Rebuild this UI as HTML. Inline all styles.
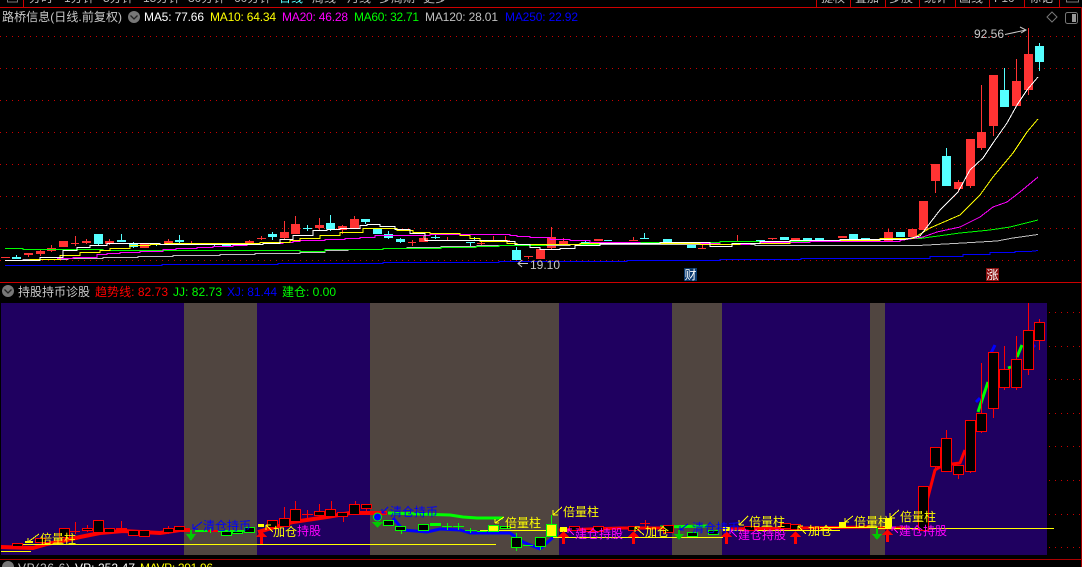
<!DOCTYPE html>
<html lang="zh"><head><meta charset="utf-8"><title>路桥信息</title>
<style>
html,body{margin:0;padding:0;background:#000;width:1082px;height:567px;overflow:hidden}
svg{display:block}
text{font-family:"Liberation Sans","WenQuanYi Zen Hei","Noto Sans CJK SC",sans-serif;font-size:12px}
.c{shape-rendering:crispEdges}
</style></head><body>
<svg width="1082" height="567" viewBox="0 0 1082 567" xmlns="http://www.w3.org/2000/svg">
<rect width="1082" height="567" fill="#000"/>
<!-- header -->
<g fill="#bbb">
<text x="29" y="2">分时</text><text x="64" y="2">1分钟</text><text x="103" y="2">5分钟</text><text x="143" y="2">15分钟</text><text x="188" y="2">30分钟</text><text x="234" y="2">60分钟</text>
<text x="279" y="2" fill="#5ff">日线</text><text x="312" y="2">周线</text><text x="347" y="2">月线</text><text x="379" y="2">多周期</text><text x="423" y="2">更多</text>
<text x="821" y="2">提权</text><text x="855" y="2">叠加</text><text x="889" y="2">多股</text><text x="924" y="2">统计</text><text x="959" y="2">画线</text><text x="994" y="2">F10</text><text x="1029" y="2">标记</text>
</g>
<g class="c" fill="none">
<path stroke="#777" d="M7.500 -1v3h10v-3M1066.500 -1v3h12v-3"/>
<path stroke="#c00" d="M0 7.500H1082M23.500 0V7M816.500 0V7M850.500 0V7M885.500 0V7M919.500 0V7M955.500 0V7M989.500 0V7M1024.500 0V7M1059.500 0V7"/>
<path stroke="#a00" d="M1081.500 7V567"/>
<path stroke="#c00" d="M0 282.500H1082"/>
<path stroke="#a00" d="M0 559.500H1082"/>
</g>
<!-- title row -->
<text x="2" y="21" fill="#c8c8c8" textLength="120" lengthAdjust="spacing">路桥信息(日线.前复权)</text>
<circle cx="134" cy="17" r="6" fill="#777"/><path d="M130.500 15.500l3.500 3.500 3.500-3.500" fill="none" stroke="#222" stroke-width="1.300"/>
<text x="144" y="21" fill="#fff" textLength="60" lengthAdjust="spacing">MA5: 77.66</text>
<text x="210" y="21" fill="#ff0" textLength="66" lengthAdjust="spacing">MA10: 64.34</text>
<text x="282" y="21" fill="#f0f" textLength="66" lengthAdjust="spacing">MA20: 46.28</text>
<text x="354" y="21" fill="#0f0" textLength="65" lengthAdjust="spacing">MA60: 32.71</text>
<text x="425" y="21" fill="#c0c0c0" textLength="73" lengthAdjust="spacing">MA120: 28.01</text>
<text x="505" y="21" fill="#00f" textLength="73" lengthAdjust="spacing">MA250: 22.92</text>
<path d="M1052 12l5 5-5 5-5-5z" fill="none" stroke="#777"/>
<rect x="1065.500" y="12.500" width="12" height="11" rx="2" fill="none" stroke="#777"/><rect x="1072" y="14" width="4" height="8" fill="#999"/>
<!-- upper grid -->
<path fill="none" stroke="#c00" stroke-dasharray="1 5" class="c" d="M0 36.500H1080M0 68.500H1080M0 100.500H1080M0 132.500H1080M0 164.500H1080M0 196.500H1080M0 228.500H1080M0 260.500H1080"/>
<!-- upper candles -->
<g class="c">
<path fill="none" stroke="#f33" d="M28.500 253V257M40.500 249V256M51.500 245V252M75.500 236V246M86.500 239V244M109.500 239V245M168.500 239V245M191.500 241V245M249.500 240V244M261.500 236V240M284.500 221V240M295.500 216V224M319.500 218V231M342.500 225V234M354.500 216V228M412.500 240V246M423.500 235V238M447.500 237V240M481.500 241V245M493.500 236V240M505.500 236V240M528.500 256V259M551.500 227V250M563.500 238V244M633.500 237V241M702.500 244V249M737.500 235V242M772.500 238V240M888.500 229V232M935.500 181V193M958.500 180V192M970.500 186V188M981.500 85V150M993.500 126V136M1016.500 59V81M1028.500 28V95"/>
<path fill="#f33" d="M1 257h9v1h-9zM24 253h9v2h-9zM36 251h9v3h-9zM47 248h9v3h-9zM59 241h9v6h-9zM71 243h8v1h-8zM82 241h9v2h-9zM105 241h9v3h-9zM140 244h9v4h-9zM164 241h9v3h-9zM187 243h9v2h-9zM198 244h8v1h-8zM232 244h10v1h-10zM245 241h9v3h-9zM257 238h9v1h-9zM280 232h9v6h-9zM291 224h9v10h-9zM315 225h9v3h-9zM338 226h9v4h-9zM350 219h9v9h-9zM408 242h8v1h-8zM419 238h9v4h-9zM477 243h8v1h-8zM489 240h9v2h-9zM501 240h9v1h-9zM524 256h9v1h-9zM536 249h9v10h-9zM547 237h9v11h-9zM559 241h9v3h-9zM594 239h9v2h-9zM629 240h9v1h-9zM698 248h8v1h-8zM768 238h9v1h-9zM791 238h9v2h-9zM838 236h9v2h-9zM884 232h9v9h-9zM908 229h9v8h-9zM919 201h9v29h-9zM931 164h9v17h-9zM954 182h9v7h-9zM966 139h9v47h-9zM977 132h9v16h-9zM989 75h9v51h-9zM1012 81h9v25h-9zM1024 54h9v36h-9z"/>
<path fill="none" stroke="#5ff" d="M16.500 255V257M98.500 244V245M121.500 234V240M133.500 242V248M156.500 244V246M179.500 235V244M214.500 245V246M226.500 243V247M272.500 232V240M307.500 225V231M330.500 215V231M365.500 222V224M388.500 231V239M400.500 238V243M435.500 235V239M474.500 237V240M470.500 243V246M516.500 247V250M585.500 240V242M644.500 233V239M946.500 148V156M1004.500 68V90M1039.500 43V71"/>
<path fill="#5ff" d="M12 257h9v2h-9zM94 234h9v10h-9zM117 240h9v2h-9zM129 244h9v3h-9zM152 244h8v1h-8zM175 240h9v2h-9zM210 243h8v2h-8zM222 245h9v1h-9zM268 234h9v3h-9zM326 223h9v6h-9zM303 228h9v1h-9zM361 219h9v3h-9zM373 229h9v5h-9zM384 234h9v4h-9zM396 239h9v3h-9zM431 237h9v1h-9zM466 242h9v1h-9zM512 250h9v10h-9zM581 242h10v2h-10zM604 240h8v1h-8zM640 238h9v1h-9zM663 239h9v4h-9zM687 245h9v3h-9zM756 240h9v1h-9zM780 237h9v3h-9zM803 238h9v2h-9zM815 238h9v2h-9zM849 234h9v5h-9zM861 238h9v2h-9zM896 232h9v5h-9zM942 156h9v30h-9zM1000 90h9v17h-9zM1035 46h9v16h-9z"/>
</g>
<!-- MA lines -->
<g fill="none" class="c">
<path stroke="#00f" d="M5 265.500H162V264.500H278V263.500H383V262.500H499V261.500H627V260.500H720V259.500H801V258.500H930V256.500H963V254.500H990V252.500H1015V251.500H1030L1038 250.500"/>
<path stroke="#c0c0c0" d="M5 260.500H23V259.500H68V258.500H103V257.500H138V256.500H173V255.500H220V254.500H255V253.500H300V252.500H325V250.500H348V249.500H383V248.500H407V247.500H441V246.500H477V245.500H570V244.500H755V245.500H918L963 243L997 241L1013 238L1038 234.500"/>
<path stroke="#0f0" d="M5 248.500H23V249.500H103V250.500H300V251.500H325V249.500H383V248.500H441V247.500H476V246.500H499V245.500H546V244.500H600V242.500H720V241.500H820V240.500H880V238.500H920L960 233L990 230L1010 227L1038 220"/>
<path stroke="#f0f" d="M57 258.500H73V257.500H97V254.500H107V253.500H120V252.500H140V251.500H163V249.500H176V248.500H197V247.500H213V246.500H233V245.500H247V244.500H263V243.500H283V242.500H293V241.500H300V240.500H325V239.500H345V238.500H360V237.500H375V235.500H430V234.500H510V235.500H517V236.500H530V237.500H550V239.500H570V240.500H590V242.500H640V243.500H720V244.500H750V243.500H760V242.500H810V241.500H900V240.500L923 237L937 232L960 227L980 217L993 207L1007 202L1020 192L1038 177"/>
<path stroke="#ff0" d="M5 260.500H30V259.500H60V255.500H80V252.500H100V250.500H110V248.500H130V245.500H150V244.500H165V243.500H260V242.500H290V240.500H300V238.500H320V235.500H340V232.500H363V228.500H397V230.500H413V232.500H430V233.500H460V235.500H470V238.500H480V241.500H507V243.500H517V244.500H580V243.500H700V244.500H740V243.500H790V240.500H880V238.500H913L930 228L960 215L980 195L993 177L1013 153L1027 132L1038 119"/>
<path stroke="#fff" d="M5 260.500H40V257.500H63V250.500H77V247.500H90V245.500H107V243.500H160V244.500H263V243.500H280V239.500H293V235.500H313V230.500H327V229.500H340V228.500H360V225.500H367V224.500H380V226.500H395V229.500H410V233.500H425V240.500H507V241.500H515V244.500H530V247.500H540V249.500H560V248.500H575V245.500H600V243.500H660V242.500H710V246.500H732V243.500H760V241.500H790V240.500H840V239.500H905L920 236L940 210L958 192L970 170L983 158L993 143L1007 123L1017 105L1027 90L1038 77"/>
</g>
<!-- labels upper -->
<text x="974" y="38" fill="#c8c8c8" textLength="30" lengthAdjust="spacing">92.56</text>
<path d="M1005 34.500L1026 30M1020 27l6 3-5 3" fill="none" stroke="#c8c8c8"/>
<path d="M528 263.500H518M522 260l-4 3.500 4 3.500" fill="none" stroke="#c8c8c8"/>
<text x="530" y="269" fill="#c8c8c8" textLength="30" lengthAdjust="spacing">19.10</text>
<rect x="684" y="268" width="13" height="13" fill="#0a3a70"/><text x="684.500" y="279" fill="#fff">财</text>
<rect x="986" y="268" width="13" height="13" fill="#8a0f0f"/><text x="986.500" y="279" fill="#fff">涨</text>
<!-- subpanel title -->
<circle cx="8" cy="291" r="6" fill="#777"/><path d="M4.500 289.500l3.500 3.500 3.500-3.500" fill="none" stroke="#222" stroke-width="1.300"/>
<text x="18" y="296" fill="#c8c8c8" textLength="72" lengthAdjust="spacing">持股持币诊股</text>
<text x="95" y="296" fill="#f00" textLength="73" lengthAdjust="spacing">趋势线: 82.73</text>
<text x="173" y="296" fill="#0f0" textLength="49" lengthAdjust="spacing">JJ: 82.73</text>
<text x="227" y="296" fill="#00f" textLength="50" lengthAdjust="spacing">XJ: 81.44</text>
<text x="282" y="296" fill="#0f0" textLength="54" lengthAdjust="spacing">建仓: 0.00</text>
<!-- lower grid -->
<path fill="none" stroke="#c00" stroke-dasharray="1 5" class="c" d="M1049 312.500H1080M1049 346.500H1080M1049 379.500H1080M1049 413.500H1080M1049 446.500H1080M1049 480.500H1080M1049 514.500H1080M1049 547.500H1080"/>
<!-- lower panel -->
<g class="c">
<rect x="1" y="303" width="1046" height="252" fill="#1f0060"/>
<path fill="#504540" d="M184 303h73v252h-73zM370 303h189v252h-189zM672 303h50v252h-50zM870 303h15v252h-15z"/>
</g>
<!-- trend bands -->
<g fill="none" stroke-linejoin="bevel">
<path stroke="#00f" stroke-width="3" d="M393 518L403 530L427 532L440 529L460 530L470 533L510 533L523 542L540 549L550 540L557 534"/>
<path stroke="#00f" stroke-width="3" d="M976 402L980 398M995 345L990 355M1035 345L1030 350"/>
<path stroke="#0f0" stroke-width="3" d="M388 513L450 515L463 517L477 518L503 518M660 527L708 526"/>
<path stroke="#0f0" stroke-width="2" d="M195 531H208M218 531H245"/>
<path stroke="#0f0" stroke-width="3" d="M978 412L988 382M1008 368L1011 367M1017 357L1022 345"/>
<path stroke="#f00" stroke-width="2" d="M208 531H218"/>
<path stroke="#f00" stroke-width="4" d="M1 547L33 548L47 544L67 540L80 537L100 533L123 531L160 533L180 530L190 530M258 532L293 522L327 517L350 513L387 513"/>
<path stroke="#f00" stroke-width="3" d="M559 530L620 528L670 528M722 529L870 527M878 528L905 528M920 528L928 497L935 470L940 467L952 464L960 463L965 450"/>
</g>
<!-- lower yellow lines -->
<path class="c" fill="none" stroke="#ff0" d="M1 551.500H31M13 544.500H496M480 530.500H547M553 537.500H723M723 530.500H840M820 527.500H877M877 528.500H1054"/>
<!-- lower candles -->
<g class="c">
<path fill="none" stroke="#f00" d="M70 531.500H80M302 514.500H313M640 523.500H650M75.500 522V534M87.500 525V532M121.500 521V532M168.500 526V534M284.500 507V518M295.500 501V509M307.500 510V518M319.500 504V516M331.500 501V518M343.500 512V522M355.500 501V504M366.500 508V513M645.500 520V527M946.500 430V438M958.500 474V479M970.500 471V473M981.500 363V413M981.500 431V433M993.500 408V418M1004.500 346V369M1004.500 387V390M1016.500 336V359M1016.500 387V390M1028.500 303V330M1028.500 369V375M1039.500 319V322M1039.500 340V350M935.500 466V470"/>
<path fill="#000" stroke="#f00" d="M12.500 543.500h10v3h-10zM35.500 538.500h10v4h-10zM59.500 528.500h10v9h-10zM82.500 528.500h10v2h-10zM93.500 520.500h10v12h-10zM104.500 528.500h10v4h-10zM116.500 528.500h10v1h-10zM128.500 530.500h10v5h-10zM139.500 530.500h10v6h-10zM163.500 528.500h10v4h-10zM174.500 526.500h10v4h-10zM267.500 520.500h10v7h-10zM279.500 518.500h10v8h-10zM290.500 509.500h10v12h-10zM314.500 511.500h10v4h-10zM325.500 509.500h10v7h-10zM337.500 512.500h10v4h-10zM349.500 504.500h10v10h-10zM361.500 504.500h10v4h-10zM569.500 526.500h10v4h-10zM582.500 529.500h10v2h-10zM593.500 526.500h10v5h-10zM628.500 526.500h10v4h-10zM663.500 525.500h10v7h-10zM744.500 526.500h10v4h-10zM780.500 523.500h10v5h-10zM790.500 524.500h10v5h-10zM918.500 486.500h10v44h-10zM930.500 447.500h10v19h-10zM941.500 438.500h10v33h-10zM953.500 465.500h10v9h-10zM965.500 420.500h10v51h-10zM976.500 413.500h10v18h-10zM988.500 352.500h10v56h-10zM999.500 369.500h10v18h-10zM1011.500 359.500h10v28h-10zM1023.500 330.500h10v39h-10zM1034.500 322.500h10v18h-10z"/>
<path fill="none" stroke="#0f0" d="M551.500 515V524M516.500 533V537M516.500 547V551M540.500 546V550M442 526.500H452M453 526.500H464M465 530.500H477M477 531.500H487M523 545.500H533M447.500 523V530M458.500 523V530M470.500 528V533M401.500 530V534M210.500 528V533"/>
<path fill="#000" stroke="#0f0" d="M221.500 531.500h10v4h-10zM232.500 531.500h10v2h-10zM244.500 527.500h10v5h-10zM383.500 520.500h10v5h-10zM395.500 526.500h10v4h-10zM418.500 524.500h10v6h-10zM500.500 526.500h10v2h-10zM511.500 537.500h10v10h-10zM535.500 537.500h10v9h-10zM687.500 532.500h10v4h-10zM708.500 530.500h10v4h-10z"/>
<path fill="#0f0" d="M430 523h11v3h-11z"/>
<path fill="#ff0" stroke="#0f0" d="M488.500 525.500h10v6h-10zM546.500 524.500h10v12h-10z"/>
<path fill="#ff0" d="M25 541h8v2h-8zM258 524h6v3h-6zM560 527h7v5h-7zM723 527h7v4h-7zM839 522h7v5h-7zM885 518h7v10h-7z"/>
</g>
<!-- blue dot & down arrows -->
<circle cx="377.500" cy="517" r="4" fill="#00f" stroke="#0f0"/>
<g fill="#0c0" class="c">
<path d="M190 530h2v4h-2zM186 534h10l-5 7z"/>
<path d="M372 522h11l-5.500 6z"/>
<path d="M678 530h2v4h-2zM674 534h10l-5 6z"/>
<path d="M876 528h2v6h-2zM872 534h10l-5 6z"/>
</g>
<g fill="#f00" class="c">
<path d="M260 537h3v7h-3zM256 537h11l-5.500-6z"/>
<path d="M562 537h3v7h-3zM558 537h11l-5.500-6z"/>
<path d="M632 537h3v7h-3zM628 537h11l-5.500-6z"/>
<path d="M725 537h3v7h-3zM721 537h11l-5.500-6z"/>
<path d="M794 537h3v7h-3zM790 537h11l-5.500-6z"/>
<path d="M886 535h3v7h-3zM882 535h11l-5.500-6z"/>
</g>
<!-- annotation arrows -->
<g fill="none" class="c">
<path stroke="#ff0" d="M28 542L39 534M28 542v-4M28 542h4M495 523L504 517M495 523v-4M495 523h4M553 515L562 507M553 515v-5M553 515h5M739 525L748 516M739 525v-5M739 525h5M845 522L853 516M845 522v-4M845 522h4M890 518L899 510M890 518v-5M890 518h5M266 525L273 532M266 525h5M266 525v5M635 527L644 535M635 527h5M635 527v5M798 526L806 534M798 526h5M798 526v5"/>
<path stroke="#00f" d="M193 529L202 522M193 529h5M193 529v-5M382 513L388 507M382 513h4M382 513v-4M680 530L688 524M680 530h4M680 530v-4"/>
<path stroke="#f0f" d="M568 529L574 535M568 529h4M568 529v4M730 530L737 537M730 530h4M730 530v4M892 527L898 533M892 527h4M892 527v4"/>
</g>
<!-- annotation labels -->
<g font-size="12">
<text x="40" y="543" fill="#ff0">倍量柱</text>
<text x="203" y="530" fill="#00f">清仓持币</text>
<text x="273" y="536" fill="#ff0">加仓</text>
<text x="297" y="535" fill="#f0f">持股</text>
<text x="390" y="516" fill="#00f">清仓持币</text>
<text x="505" y="527" fill="#ff0">倍量柱</text>
<text x="563" y="516" fill="#ff0">倍量柱</text>
<text x="575" y="538" fill="#f0f">建仓持股</text>
<text x="645" y="536" fill="#ff0">加仓</text>
<text x="692" y="532" fill="#00f">清仓持币</text>
<text x="749" y="526" fill="#ff0">倍量柱</text>
<text x="738" y="539" fill="#f0f">建仓持股</text>
<text x="808" y="535" fill="#ff0">加仓</text>
<text x="854" y="526" fill="#ff0">倍量柱</text>
<text x="900" y="521" fill="#ff0">倍量柱</text>
<text x="899" y="535" fill="#f0f">建仓持股</text>
</g>
<!-- bottom row -->
<circle cx="8" cy="567" r="6" fill="#777"/>
<text x="18" y="572" fill="#c8c8c8" textLength="52" lengthAdjust="spacing">VP(26,6)</text>
<text x="75" y="572" fill="#fff" textLength="60" lengthAdjust="spacing">VP: 252.47</text>
<text x="140" y="572" fill="#ff0" textLength="73" lengthAdjust="spacing">MAVP: 291.96</text>
</svg>
</body></html>
